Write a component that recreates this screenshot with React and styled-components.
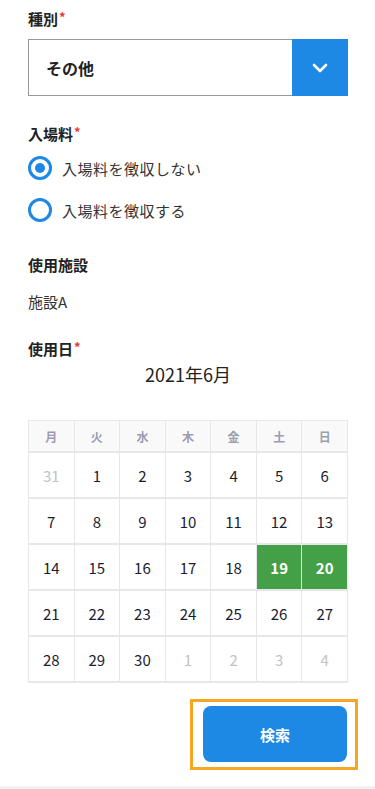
import React from 'react';
import styled, { createGlobalStyle } from 'styled-components';

const GlobalStyle = createGlobalStyle`
  body {
    margin: 0;
    background: #fff;
    font-family: "Noto Sans CJK JP", "Noto Sans", sans-serif;
    color: #222;
  }
`;

const weekdays = ['月', '火', '水', '木', '金', '土', '日'];

// 2021年6月のカレンダー（月曜始まり）
const days = [
  [31, 1, 2, 3, 4, 5, 6],
  [7, 8, 9, 10, 11, 12, 13],
  [14, 15, 16, 17, 18, 19, 20],
  [21, 22, 23, 24, 25, 26, 27],
  [28, 29, 30, 1, 2, 3, 4],
];
const selected = [19, 20];

const App = () => {
  return (
    <>
      <GlobalStyle />
      <Page>
        <Label>種別<Required>*</Required></Label>
        <Select>
          <SelectValue>その他</SelectValue>
          <SelectButton>
            <svg width="16" height="10" viewBox="0 0 16 10" fill="none">
              <path d="M2 2l6 6 6-6" stroke="#fff" strokeWidth="2.6" strokeLinecap="round" strokeLinejoin="round" />
            </svg>
          </SelectButton>
        </Select>

        <Label gap={27}>入場料<Required>*</Required></Label>
        <RadioList>
          <RadioRow>
            <Radio checked />
            <RadioText>入場料を徴収しない</RadioText>
          </RadioRow>
          <RadioRow>
            <Radio />
            <RadioText>入場料を徴収する</RadioText>
          </RadioRow>
        </RadioList>

        <Label gap={32}>使用施設</Label>
        <Value>施設A</Value>

        <Label gap={25}>使用日<Required>*</Required></Label>
        <MonthTitle>2021年6月</MonthTitle>

        <Calendar>
          {weekdays.map(w => (
            <HeadCell key={w}>{w}</HeadCell>
          ))}
          {days.map((week, wi) =>
            week.map((d, di) => {
              const other = (wi === 0 && d > 7) || (wi === 4 && d < 7);
              const isSel = !other && selected.includes(d);
              return (
                <DayCell key={`${wi}-${di}`} other={other} selected={isSel}>
                  {d}
                </DayCell>
              );
            })
          )}
        </Calendar>

        <Actions>
          <FocusRing>
            <SearchButton>検索</SearchButton>
          </FocusRing>
        </Actions>
      </Page>
      <FooterStrip />
    </>
  );
};

const Page = styled.div`
  padding: 8px 27px 16px 28px;
`;

const Label = styled.div`
  font-size: 15px;
  font-weight: 700;
  line-height: 22px;
  height: 22px;
  color: #222;
  margin-top: ${props => props.gap || 0}px;
`;

const Required = styled.span`
  color: #e53935;
  font-size: 13px;
  line-height: 0;
  vertical-align: 3px;
  margin-left: 1px;
`;

const Select = styled.div`
  display: flex;
  margin-top: 9px;
  height: 57px;
  box-sizing: border-box;
  border: 1px solid #999;
  border-right: none;
`;

const SelectValue = styled.div`
  flex: 1;
  display: flex;
  align-items: center;
  padding-left: 17px;
  font-size: 16px;
  font-weight: 700;
  color: #222;
`;

const SelectButton = styled.div`
  width: 56px;
  margin: -1px 0;
  background: #1e88e5;
  display: flex;
  align-items: center;
  justify-content: center;
`;

const RadioList = styled.div`
  display: flex;
  flex-direction: column;
  gap: 18px;
  margin-top: 11px;
`;

const RadioRow = styled.div`
  display: flex;
  align-items: center;
  gap: 10px;
  height: 24px;
`;

const Radio = styled.span`
  width: 24px;
  height: 24px;
  box-sizing: border-box;
  border-radius: 50%;
  border: 3px solid #1e88e5;
  display: flex;
  align-items: center;
  justify-content: center;

  &::after {
    content: '';
    display: ${props => (props.checked ? 'block' : 'none')};
    width: 10px;
    height: 10px;
    border-radius: 50%;
    background: #1e88e5;
  }
`;

const RadioText = styled.span`
  font-size: 15px;
  color: #333;
  letter-spacing: 0.5px;
`;

const Value = styled.div`
  margin-top: 15px;
  font-size: 15px;
  line-height: 22px;
  color: #333;
`;

const MonthTitle = styled.div`
  text-align: center;
  font-size: 18px;
  line-height: 26px;
  color: #222;
  margin-top: 1px;
`;

const Calendar = styled.div`
  margin-top: 33px;
  display: grid;
  grid-template-columns: repeat(7, 1fr);
  column-gap: 1px;
  row-gap: 2px;
  padding: 1px 1px 2px 1px;
  background: #e6e6eb;
`;

const HeadCell = styled.div`
  height: 30px;
  display: flex;
  align-items: center;
  justify-content: center;
  background: #f9f9fa;
  font-size: 12px;
  font-weight: 700;
  color: #9c9cb0;
`;

const DayCell = styled.div`
  height: 44px;
  display: flex;
  align-items: center;
  justify-content: center;
  font-size: 15px;
  font-weight: ${props => (props.selected ? 700 : 400)};
  background: ${props => (props.selected ? '#43a047' : '#fff')};
  color: ${props => (props.selected ? '#fff' : props.other ? '#c2c2c2' : '#1c1c30')};
`;

const Actions = styled.div`
  display: flex;
  justify-content: flex-end;
  margin-top: 16px;
  margin-right: -10px;
`;

const FocusRing = styled.div`
  border: 3px solid #f5a623;
  padding: 4px 8px 5px 10px;
`;

const SearchButton = styled.button`
  display: block;
  width: 144px;
  height: 56px;
  border: none;
  border-radius: 8px;
  background: #1e88e5;
  color: #fff;
  font-family: "Noto Sans CJK JP", "Noto Sans", sans-serif;
  font-size: 15px;
  font-weight: 700;
  cursor: pointer;
`;

const FooterStrip = styled.div`
  height: 8px;
  background: #f1f1f4;
`;

export default App;
